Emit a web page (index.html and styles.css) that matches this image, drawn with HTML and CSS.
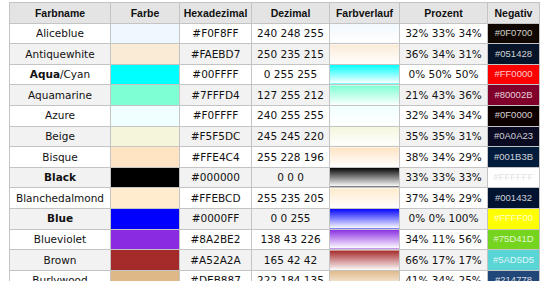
FILE: index.html
```html
<!DOCTYPE html>
<html>
<head>
<meta charset="utf-8">
<link rel="stylesheet" href="styles.css">
</head>
<body>
<div class="wrap">
<table class="colors">
  <colgroup>
    <col class="c-name"><col class="c-swatch"><col class="c-hex"><col class="c-dec"><col class="c-grad"><col class="c-pct"><col class="c-neg">
  </colgroup>
  <thead>
    <tr><th>Farbname</th><th>Farbe</th><th>Hexadezimal</th><th>Dezimal</th><th>Farbverlauf</th><th>Prozent</th><th>Negativ</th></tr>
  </thead>
  <tbody>
    <tr><td>Aliceblue</td><td class="sw" style="background:#F0F8FF"></td><td>#F0F8FF</td><td>240 248 255</td><td class="gr" style="background:linear-gradient(#F0F8FF,#fff)"></td><td>32% 33% 34%</td><td class="neg" style="background:#0F0700">#0F0700</td></tr>
    <tr><td>Antiquewhite</td><td class="sw" style="background:#FAEBD7"></td><td>#FAEBD7</td><td>250 235 215</td><td class="gr" style="background:linear-gradient(#FAEBD7,#fff)"></td><td>36% 34% 31%</td><td class="neg" style="background:#051428">#051428</td></tr>
    <tr><td><b>Aqua</b>/Cyan</td><td class="sw" style="background:#00FFFF"></td><td>#00FFFF</td><td>0 255 255</td><td class="gr" style="background:linear-gradient(#00FFFF,#fff)"></td><td>0% 50% 50%</td><td class="neg" style="background:#FF0000">#FF0000</td></tr>
    <tr><td>Aquamarine</td><td class="sw" style="background:#7FFFD4"></td><td>#7FFFD4</td><td>127 255 212</td><td class="gr" style="background:linear-gradient(#7FFFD4,#fff)"></td><td>21% 43% 36%</td><td class="neg" style="background:#80002B">#80002B</td></tr>
    <tr><td>Azure</td><td class="sw" style="background:#F0FFFF"></td><td>#F0FFFF</td><td>240 255 255</td><td class="gr" style="background:linear-gradient(#F0FFFF,#fff)"></td><td>32% 34% 34%</td><td class="neg" style="background:#0F0000">#0F0000</td></tr>
    <tr><td>Beige</td><td class="sw" style="background:#F5F5DC"></td><td>#F5F5DC</td><td>245 245 220</td><td class="gr" style="background:linear-gradient(#F5F5DC,#fff)"></td><td>35% 35% 31%</td><td class="neg" style="background:#0A0A23">#0A0A23</td></tr>
    <tr><td>Bisque</td><td class="sw" style="background:#FFE4C4"></td><td>#FFE4C4</td><td>255 228 196</td><td class="gr" style="background:linear-gradient(#FFE4C4,#fff)"></td><td>38% 34% 29%</td><td class="neg" style="background:#001B3B">#001B3B</td></tr>
    <tr><td><b>Black</b></td><td class="sw" style="background:#000000"></td><td>#000000</td><td>0 0 0</td><td class="gr" style="background:linear-gradient(#000000,#fff)"></td><td>33% 33% 33%</td><td class="neg neg-light" style="background:#FFFFFF">#FFFFFF</td></tr>
    <tr><td>Blanchedalmond</td><td class="sw" style="background:#FFEBCD"></td><td>#FFEBCD</td><td>255 235 205</td><td class="gr" style="background:linear-gradient(#FFEBCD,#fff)"></td><td>37% 34% 29%</td><td class="neg" style="background:#001432">#001432</td></tr>
    <tr><td><b>Blue</b></td><td class="sw" style="background:#0000FF"></td><td>#0000FF</td><td>0 0 255</td><td class="gr" style="background:linear-gradient(#0000FF,#fff)"></td><td>0% 0% 100%</td><td class="neg" style="background:#FFFF00">#FFFF00</td></tr>
    <tr><td>Blueviolet</td><td class="sw" style="background:#8A2BE2"></td><td>#8A2BE2</td><td>138 43 226</td><td class="gr" style="background:linear-gradient(#8A2BE2,#fff)"></td><td>34% 11% 56%</td><td class="neg" style="background:#75D41D">#75D41D</td></tr>
    <tr><td>Brown</td><td class="sw" style="background:#A52A2A"></td><td>#A52A2A</td><td>165 42 42</td><td class="gr" style="background:linear-gradient(#A52A2A,#fff)"></td><td>66% 17% 17%</td><td class="neg" style="background:#5AD5D5">#5AD5D5</td></tr>
    <tr><td>Burlywood</td><td class="sw" style="background:#DEB887"></td><td>#DEB887</td><td>222 184 135</td><td class="gr" style="background:linear-gradient(#DEB887,#fff)"></td><td>41% 34% 25%</td><td class="neg" style="background:#214778">#214778</td></tr>
  </tbody>
</table>
</div>
</body>
</html>
```
FILE: styles.css
```css
html, body {
  margin: 0;
  padding: 0;
  background: #fff;
}
.wrap {
  padding: 2px 0 0 9px;
}
.colors {
  border-collapse: collapse;
  table-layout: fixed;
  width: 531px;
  font-family: "DejaVu Sans", Verdana, sans-serif;
  font-size: 10.5px;
  color: #111;
}
.c-name { width: 101px; }
.c-swatch { width: 69px; }
.c-hex { width: 72px; }
.c-dec { width: 78px; }
.c-grad { width: 70px; }
.c-pct { width: 88px; }
.c-neg { width: 52px; }
.colors th,
.colors td {
  border: 1px solid #c4c4c4;
  padding: 3.5px 0;
  line-height: 12.6px;
  text-align: center;
  white-space: nowrap;
  overflow: hidden;
}
.colors th {
  background: #e4e4e4;
  font-family: "Liberation Sans", Arial, sans-serif;
  font-weight: bold;
  font-size: 10.5px;
  color: #111;
}
.colors tbody tr:nth-child(odd) td { background: #fff; }
.colors tbody tr:nth-child(even) td { background: #f2f2f2; }
.colors td.sw, .colors td.gr, .colors td.neg { background-clip: padding-box; }
.colors td b { font-weight: bold; }
.colors td.neg {
  font-family: "Liberation Sans", Arial, sans-serif;
  font-size: 9.5px;
  color: rgba(255, 255, 255, 0.82);
}
.colors td.neg-light {
  color: #e2e2e2;
}
```
